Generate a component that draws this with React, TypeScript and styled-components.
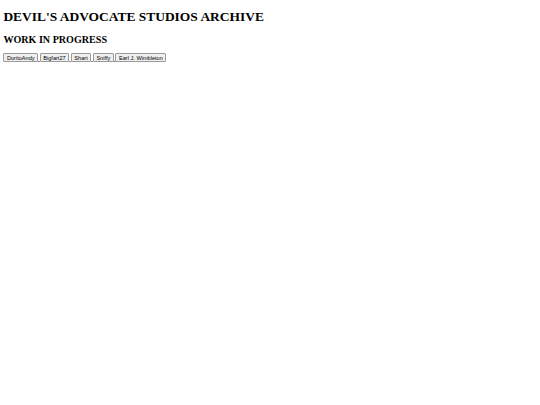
import styled, { createGlobalStyle } from "styled-components";

const characters = ["DoritoAndy", "Bigfart27", "Shart", "Sniffy", "Earl J. Wimbleton"];

export default function App() {
  return (
    <>
      <GlobalStyle />
      <Page>
        <Title>DEVIL'S ADVOCATE STUDIOS ARCHIVE</Title>
        <Subtitle>WORK IN PROGRESS</Subtitle>
        <Row>
          {characters.map((name) => (
            <CharLink key={name} href="#">
              <CharButton>{name}</CharButton>{" "}
            </CharLink>
          ))}
        </Row>
      </Page>
    </>
  );
}

const GlobalStyle = createGlobalStyle`
  html, body {
    margin: 0;
    background: #ffffff;
  }
  body {
    font-family: "Liberation Serif", "Times New Roman", serif;
    font-size: 6.72px;
    color: #000000;
  }
`;

const Page = styled.div`
  padding: 0 3.4px;
  display: flow-root;
`;

const Title = styled.h1`
  font-size: 13.44px;
  font-weight: bold;
  margin: 9px 0;
`;

const Subtitle = styled.h2`
  font-size: 10.08px;
  font-weight: bold;
  margin: 9px 0 8.4px;
`;

const Row = styled.div`
  font-size: 6.72px;
`;

// links wrap each button, so the gap between them shows an underline
const CharLink = styled.a`
  color: #0000ee;
  text-decoration: underline;
  text-decoration-color: #707070;
`;

const CharButton = styled.button`
  font-family: "Liberation Sans", Arial, sans-serif;
  font-size: 5.6px;
  color: #000000;
  background: #efefef;
  border: 0.84px solid #9a9a9a;
  border-radius: 1px;
  padding: 0.42px 2.5px;
  margin: 0;
  cursor: pointer;
`;
